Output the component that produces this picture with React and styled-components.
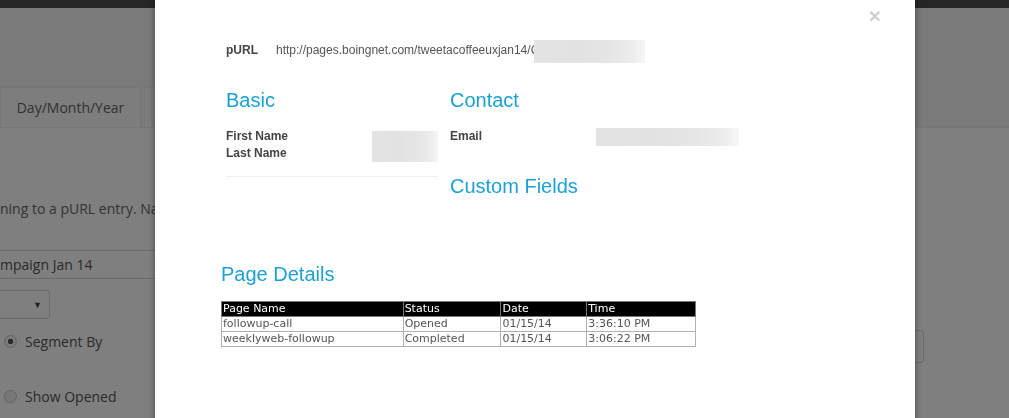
import styled, { createGlobalStyle } from 'styled-components';

const GlobalStyle = createGlobalStyle`
  html, body {
    margin: 0;
    padding: 0;
    width: 100%;
    height: 100%;
    overflow: hidden;
    background: #fff;
  }
  * {
    box-sizing: border-box;
  }
`;

export const Page = styled.div`
  width: 100%;
  height: 100vh;
  font-family: 'Open Sans', 'Liberation Sans', sans-serif;
  color: #666;
  display: flex;
  flex-direction: column;
`;
export const TopBar = styled.div`
  height: 8px;
  background: #4c4c4c;
`;
export const HeaderBand = styled.div`
  height: 120px;
  background: #f4f4f4;
  border-bottom: 1px solid #ececec;
  display: flex;
  align-items: flex-end;
  gap: 3px;
`;
export const Tab = styled.div`
  width: ${(p) => p.w}px;
  height: 40px;
  background: #fbfbfb;
  border: 1px solid #ececec;
  border-bottom: none;
  display: flex;
  align-items: center;
  justify-content: center;
  font-size: 14px;
  color: #666;
`;
export const Content = styled.div`
  flex: 1;
  display: flex;
  justify-content: space-between;
`;
export const LeftCol = styled.div`
  width: 160px;
  padding-top: 71px;
  display: flex;
  flex-direction: column;
`;
export const Intro = styled.div`
  font-size: 14px;
  white-space: nowrap;
  line-height: 20px;
`;
export const TextInput = styled.div`
  margin-top: 31px;
  height: 29px;
  border-top: 1px solid #d6d6d6;
  border-bottom: 1px solid #d6d6d6;
  font-size: 14px;
  line-height: 27px;
  color: #555;
  white-space: nowrap;
`;
export const SelectBox = styled.div`
  margin-top: 11px;
  width: 50px;
  height: 29px;
  border: 1px solid #d6d6d6;
  border-left: none;
  border-radius: 0 4px 4px 0;
  display: flex;
  align-items: center;
  justify-content: flex-end;
  padding-right: 7px;
  font-size: 9px;
  color: #444;
`;
export const RadioRow = styled.div`
  margin-top: ${(p) => p.mt}px;
  display: flex;
  align-items: center;
  gap: 8px;
  padding-left: 4px;
  font-size: 14px;
  color: #555;
  white-space: nowrap;
`;
export const Radio = styled.span`
  width: 13px;
  height: 13px;
  border-radius: 50%;
  border: 1px solid #c6c6c6;
  background: ${(p) => (p.checked ? 'radial-gradient(circle, #555 0 2.5px, #f2f2f2 3px)' : '#eee')};
`;
export const RightCol = styled.div`
  width: 310px;
  padding-top: 202px;
  padding-right: 85px;
`;
export const RightBox = styled.div`
  width: 20px;
  margin-left: auto;
  height: 33px;
  border: 1px solid #d6d6d6;
  border-left: none;
  border-radius: 0 4px 4px 0;
`;

export const Backdrop = styled.div`
  position: fixed;
  inset: 0;
  background: rgba(0, 0, 0, 0.5);
`;
export const Modal = styled.div`
  position: fixed;
  top: 0;
  bottom: -40px;
  left: 155px;
  width: 760px;
  background: #fff;
  box-shadow: 0 0 7px rgba(0, 0, 0, 0.45);
  padding: 41px 66px 0;
  font-family: 'Liberation Sans', Arial, sans-serif;
`;
export const Close = styled.div`
  position: absolute;
  top: 5px;
  right: 34px;
  font-size: 21px;
  font-weight: bold;
  color: #cfcfcf;
  line-height: 22px;
`;
export const UrlRow = styled.div`
  padding-left: 5px;
  display: flex;
  align-items: flex-start;
  font-size: 12px;
  line-height: 18px;
`;
export const Label = styled.span`
  font-weight: bold;
  color: #444;
  width: ${(p) => (p.w ? `${p.w}px` : 'auto')};
  flex-shrink: 0;
`;
export const UrlText = styled.span`
  color: #555;
  white-space: nowrap;
`;
export const Blur = styled.div`
  width: ${(p) => p.w}px;
  height: ${(p) => p.h}px;
  margin-top: ${(p) => p.mt || 0}px;
  margin-left: ${(p) => p.ml || 0}px;
  flex-shrink: 0;
  background: linear-gradient(90deg, #e4e4e4 0%, #e2e2e2 40%, #e6e6e6 70%, #ececec 88%, #f6f6f6 100%);
`;
export const Columns = styled.div`
  padding-left: 5px;
  margin-top: 26px;
  display: flex;
  gap: 12px;
`;
export const Column = styled.div`
  width: ${(p) => p.w}px;
  display: flex;
  flex-direction: column;
`;
export const Heading = styled.h3`
  margin: ${(p) => p.mt || 0}px 0 0;
  font-size: 20px;
  font-weight: normal;
  line-height: 22px;
  color: #1ba1d4;
`;
export const FieldBlock = styled.div`
  margin-top: 17px;
  display: flex;
  justify-content: space-between;
  align-items: flex-start;
  font-size: 12px;
  line-height: 17px;
`;
export const FieldLabels = styled.div`
  display: flex;
  flex-direction: column;
`;
export const Divider = styled.div`
  margin-top: 14px;
  height: 1px;
  background: #efefef;
`;
export const Table = styled.table`
  margin-top: 16px;
  width: 475px;
  border-collapse: collapse;
  font-family: 'DejaVu Sans', Verdana, sans-serif;
  font-size: 11px;
  border: 1px solid #9a9a9a;
  th,
  td {
    padding: 0 1px;
    line-height: 14px;
    height: 15px;
    text-align: left;
    border: 1px solid #b0b0b0;
    white-space: nowrap;
  }
  th {
    background: #000;
    color: #fff;
    font-weight: normal;
    border-color: #777;
  }
  td {
    color: #555;
  }
`;

const rows = [
  { page: 'followup-call', status: 'Opened', date: '01/15/14', time: '3:36:10 PM' },
  { page: 'weeklyweb-followup', status: 'Completed', date: '01/15/14', time: '3:06:22 PM' },
];

function App() {
  return (
    <>
      <GlobalStyle />
      <Page>
        <TopBar />
        <HeaderBand>
          <Tab w={141}>Day/Month/Year</Tab>
          <Tab w={120} />
        </HeaderBand>
        <Content>
          <LeftCol>
            <Intro>ning to a pURL entry. Name your segment below.</Intro>
            <TextInput>mpaign Jan 14</TextInput>
            <SelectBox>▼</SelectBox>
            <RadioRow mt={13}>
              <Radio checked />
              Segment By
            </RadioRow>
            <RadioRow mt={36}>
              <Radio />
              Show Opened
            </RadioRow>
          </LeftCol>
          <RightCol>
            <RightBox />
          </RightCol>
        </Content>
      </Page>
      <Backdrop />
      <Modal>
        <Close>×</Close>
        <UrlRow>
          <Label w={50}>pURL</Label>
          <UrlText>http://pages.boingnet.com/tweetacoffeeuxjan14/C</UrlText>
          <Blur w={111} h={23} ml={-5} mt={-1} />
        </UrlRow>
        <Columns>
          <Column w={212}>
            <Heading>Basic</Heading>
            <FieldBlock>
              <FieldLabels>
                <Label>First Name</Label>
                <Label>Last Name</Label>
              </FieldLabels>
              <Blur w={66} h={31} mt={3} />
            </FieldBlock>
            <Divider />
          </Column>
          <Column w={300}>
            <Heading>Contact</Heading>
            <FieldBlock>
              <Label w={146}>Email</Label>
              <Blur w={143} h={18} mt={0} style={{ marginRight: 'auto' }} />
            </FieldBlock>
            <Heading mt={29}>Custom Fields</Heading>
          </Column>
        </Columns>
        <Heading mt={66}>Page Details</Heading>
        <Table>
          <colgroup>
            <col style={{ width: 182 }} />
            <col style={{ width: 98 }} />
            <col style={{ width: 86 }} />
            <col style={{ width: 109 }} />
          </colgroup>
          <thead>
            <tr>
              <th>Page Name</th>
              <th>Status</th>
              <th>Date</th>
              <th>Time</th>
            </tr>
          </thead>
          <tbody>
            {rows.map((r) => (
              <tr key={r.page}>
                <td>{r.page}</td>
                <td>{r.status}</td>
                <td>{r.date}</td>
                <td>{r.time}</td>
              </tr>
            ))}
          </tbody>
        </Table>
      </Modal>
    </>
  );
}

export default App;
